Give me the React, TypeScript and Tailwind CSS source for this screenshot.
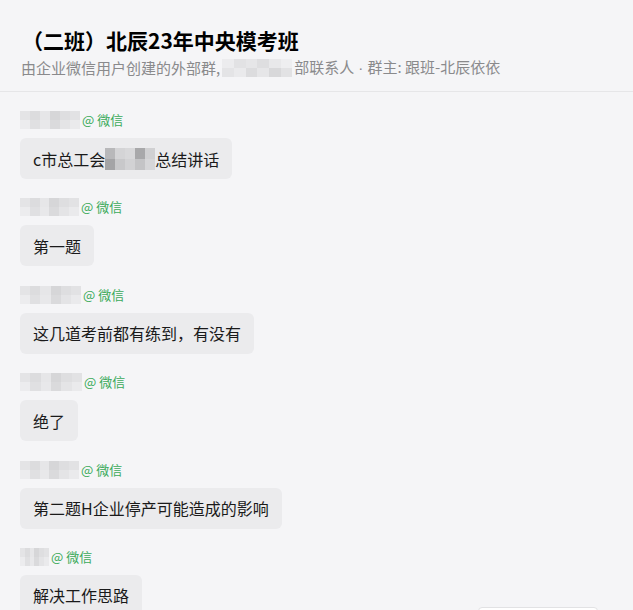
import React from "react";

const font = { fontFamily: '"Microsoft YaHei", "Noto Sans CJK SC", "Noto Sans", sans-serif' };

// pixelated "mosaic" to stand in for redacted text
function Mosaic({ cells, className }: { cells: string[][]; className: string }) {
    return (
        <span className={`inline-flex flex-col overflow-hidden align-middle ${className}`}>
            {cells.map((row, i) => (
                <span key={i} className="flex flex-1">
                    {row.map((c, j) => (
                        <span key={j} className="flex-1" style={{ backgroundColor: c }} />
                    ))}
                </span>
            ))}
        </span>
    );
}

const nameCells = [
    ["#e4e4e6", "#dcdcde", "#e6e6e8", "#d6d6d8", "#dedee0", "#e2e2e4"],
    ["#ececee", "#e0e0e2", "#e8e8ea", "#dadadc", "#e4e4e6", "#eaeaec"],
];

interface Msg {
    nameW: string;
    content: React.ReactNode;
}

const messages: Msg[] = [
    {
        nameW: "w-[60px]",
        content: (
            <>
                c市总工会
                <Mosaic
                    className="w-[50px] h-[22px]"
                    cells={[
                        ["#b8b8ba", "#d4d4d6", "#d8d8da", "#a8a8aa", "#d0d0d2"],
                        ["#a4a4a6", "#c8c8ca", "#d2d2d4", "#c4c4c6", "#d6d6d8"],
                    ]}
                />
                总结讲话
            </>
        ),
    },
    { nameW: "w-[59px]", content: "第一题" },
    { nameW: "w-[61px]", content: "这几道考前都有练到，有没有" },
    { nameW: "w-[62px]", content: "绝了" },
    { nameW: "w-[59px]", content: "第二题H企业停产可能造成的影响" },
    { nameW: "w-[29px]", content: "解决工作思路" },
];

export default function App() {
    return (
        <div className="relative w-[633px] h-[610px] overflow-hidden bg-[#f5f5f7] text-[#1a1a1a]" style={font}>
            <div className="h-[92px] border-b border-[#e6e6e8] pl-[22px] pt-[26px]">
                <h1 className="text-[21px] font-bold leading-[28px] text-black">（二班）北辰23年中央模考班</h1>
                <div className="mt-[3px] flex items-center text-[15px] leading-[20px] text-[#8a8a8c]">
                    <span className="-ml-[1px]">由企业微信用户创建的外部群,</span>
                    <Mosaic
                        className="w-[70px] h-[18px] mx-[2px]"
                        cells={[
                            ["#ececee", "#e2e2e4", "#e6e6e8", "#dedee0", "#e8e8ea", "#eeeef0"],
                            ["#e4e4e6", "#eaeaec", "#dcdcde", "#e6e6e8", "#d8d8da", "#e2e2e4"],
                        ]}
                    />
                    <span>
                        部联系人
                        <span className="font-['Liberation_Sans']"> · </span>
                        群主: 跟班-北辰依依
                    </span>
                </div>
            </div>

            <div className="flex flex-col gap-[20.4px] pl-[20px] pt-[20px]">
                {messages.map((m, i) => (
                    <div key={i} className="flex flex-col items-start gap-[10px]">
                        <div className="flex h-[16px] items-center">
                            <Mosaic className={`${m.nameW} h-[18px]`} cells={nameCells} />
                            <span className="ml-[2px] text-[13px] leading-[16px] text-[#3aaa5a]">@ 微信</span>
                        </div>
                        <div className="flex h-[41px] items-center rounded-[6px] bg-[#ebebed] px-[13px] text-[16px] leading-[20px]">
                            {m.content}
                        </div>
                    </div>
                ))}
            </div>

            <div className="absolute left-[478px] top-[607px] h-[30px] w-[120px] rounded-[4px] border border-[#e2e2e4] bg-white" />
        </div>
    );
}
